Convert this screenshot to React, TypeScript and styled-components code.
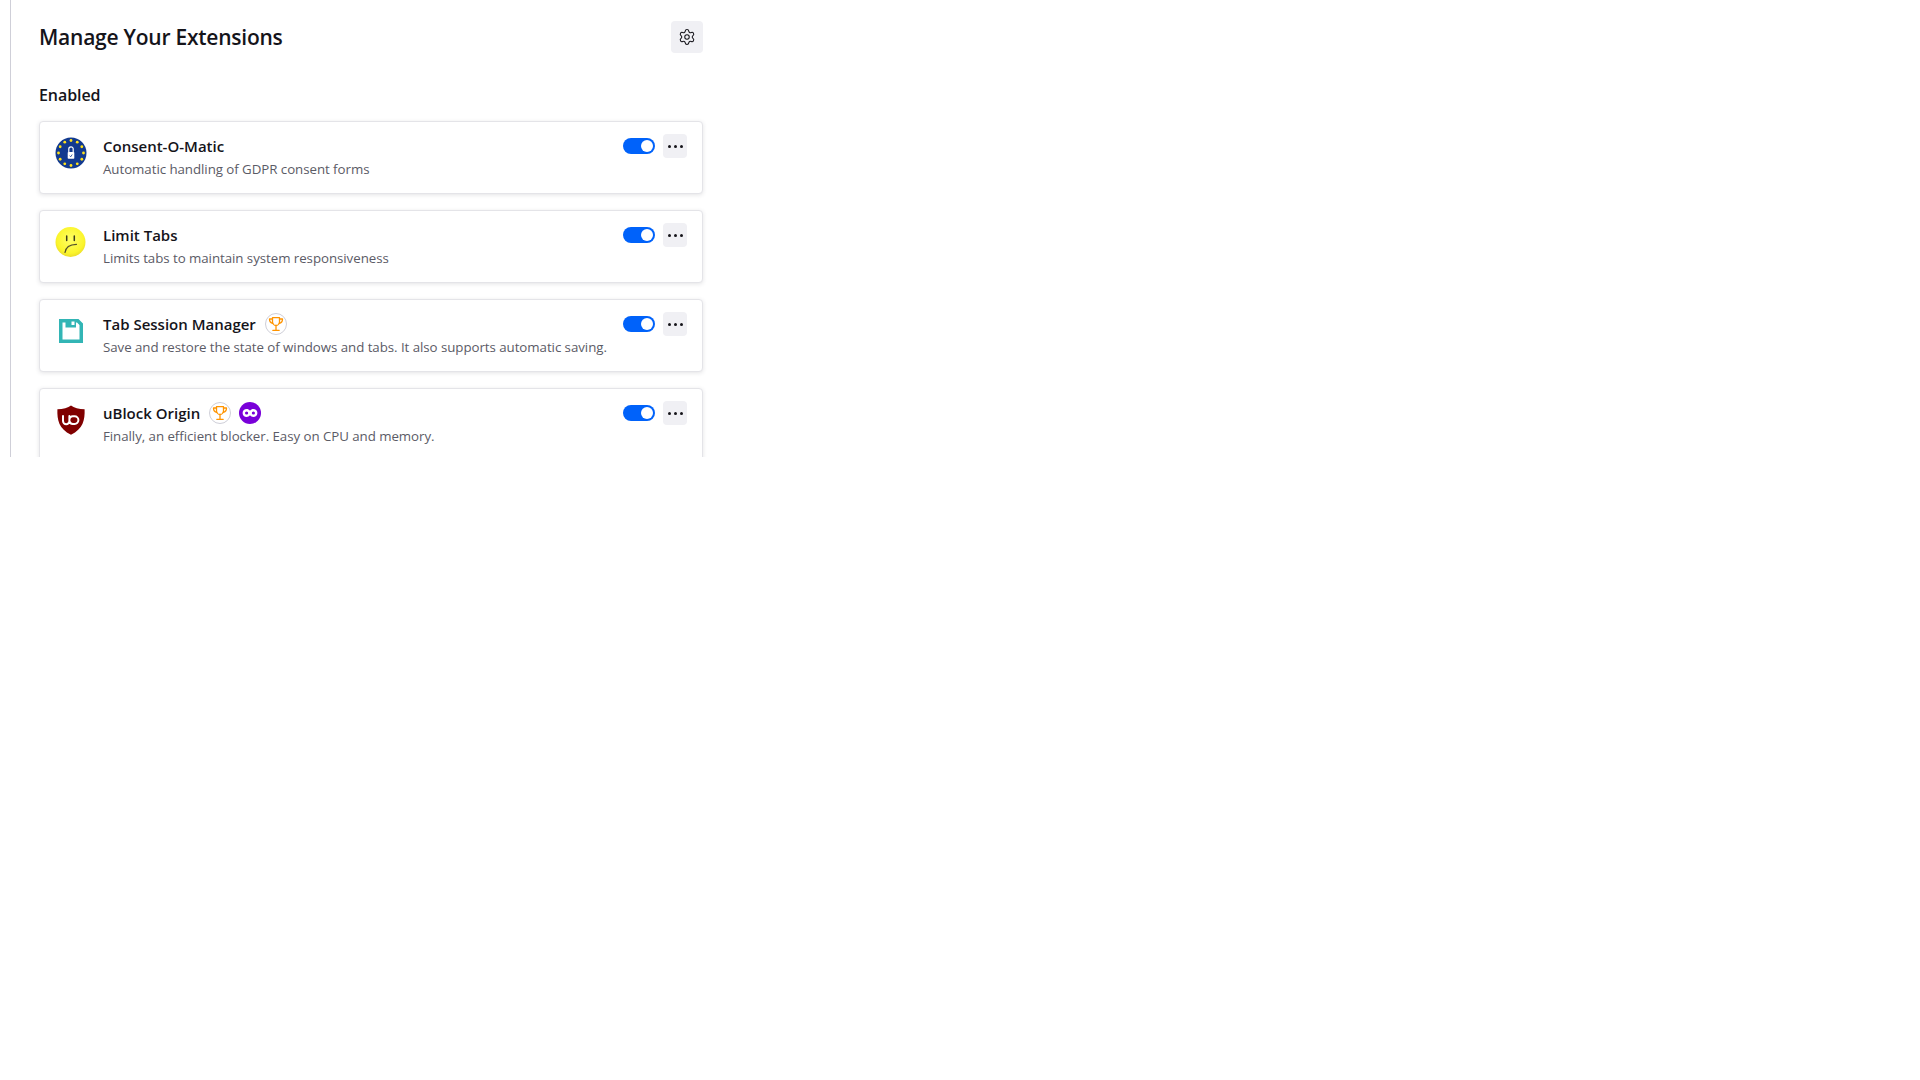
import React, { FC } from "react";
import styled, { createGlobalStyle } from "styled-components";
import { Settings } from "lucide-react";

const GlobalStyle = createGlobalStyle`
  html, body {
    margin: 0;
    padding: 0;
    background: #ffffff;
    font-family: "Open Sans", "Noto Sans", sans-serif;
    color: #15141a;
  }
`;

const Viewport = styled.div`
  height: 457px;
  overflow: hidden;
  margin-left: 10px;
  width: 720px;
  border-left: 1px solid #cfcfd8;
  box-sizing: border-box;
`;

const Content = styled.main`
  width: 664px;
  margin-left: 28px;
`;

const Header = styled.header`
  display: flex;
  align-items: center;
  justify-content: space-between;
  padding-top: 21px;
  height: 32px;
`;

const Title = styled.h1`
  margin: 0;
  font-size: 21px;
  font-weight: 600;
  letter-spacing: -0.24px;
  line-height: 32px;
`;

const SettingsButton = styled.button`
  width: 32px;
  height: 32px;
  padding: 0;
  border: none;
  border-radius: 4px;
  background: #f0f0f4;
  color: #15141a;
  display: flex;
  align-items: center;
  justify-content: center;
`;

const SectionTitle = styled.h2`
  margin: 30px 0 14px;
  font-size: 16px;
  font-weight: 600;
  letter-spacing: -0.08px;
  line-height: 24px;
`;

const CardList = styled.section`
  display: flex;
  flex-direction: column;
  gap: 16px;
`;

const Card = styled.article`
  height: 73px;
  box-sizing: border-box;
  display: flex;
  align-items: flex-start;
  padding: 12px 15px;
  background: #ffffff;
  border: 1px solid #e4e4e8;
  border-radius: 4px;
  box-shadow: 0 1px 4px rgba(58, 57, 68, 0.14);
`;

const IconSlot = styled.div`
  width: 32px;
  height: 32px;
  margin-top: 3px;
  margin-right: 16px;
  flex-shrink: 0;
  svg {
    display: block;
  }
`;

const Info = styled.div`
  flex: 1;
  min-width: 0;
`;

const NameRow = styled.div`
  display: flex;
  align-items: center;
  gap: 8px;
  height: 24px;
`;

const Name = styled.span`
  font-size: 15px;
  font-weight: 600;
  line-height: 24px;
  margin-right: 1px;
`;

const Desc = styled.p`
  margin: 1px 0 0;
  font-size: 13.3px;
  letter-spacing: -0.05px;
  line-height: 20px;
  color: #5b5b66;
  white-space: nowrap;
`;

const Controls = styled.div`
  display: flex;
  align-items: center;
  gap: 8px;
  height: 24px;
`;

const Toggle = styled.span`
  position: relative;
  display: block;
  width: 32px;
  height: 16px;
  border-radius: 8px;
  background: #0062fa;
  &::after {
    content: "";
    position: absolute;
    top: 2px;
    right: 2px;
    width: 12px;
    height: 12px;
    border-radius: 50%;
    background: #ffffff;
  }
`;

const MoreButton = styled.button`
  width: 24px;
  height: 24px;
  padding: 0;
  border: none;
  border-radius: 4px;
  background: #f0f0f4;
  display: flex;
  align-items: center;
  justify-content: center;
  gap: 3px;
`;

const Dot = styled.i`
  display: block;
  width: 3px;
  height: 3px;
  border-radius: 50%;
  background: #15141a;
`;

const RecommendedBadge = styled.span`
  width: 22px;
  height: 22px;
  box-sizing: border-box;
  border: 1px solid #cfcfd8;
  border-radius: 50%;
  display: flex;
  align-items: center;
  justify-content: center;
`;

const LineBadge = styled.span`
  width: 22px;
  height: 22px;
  display: block;
  svg {
    display: block;
  }
`;

const TrophyIcon: FC = () => (
  <svg width="16" height="16" viewBox="0 0 16 16" fill="none" stroke="#ff9400" strokeWidth="1.3" strokeLinecap="round" strokeLinejoin="round">
    <path d="M4.5 1.700h7v4.200a3.500 3.500 0 0 1-7 0z" />
    <path d="M4.500 3H1.500c0 2.600 1.100 4 3.400 4.400M11.500 3h3c0 2.600-1.100 4-3.400 4.400" />
    <path d="M8 9.400v4.600M4.800 14.300h6.400" />
  </svg>
);

const LineIcon: FC = () => (
  <svg width="22" height="22" viewBox="0 0 22 22">
    <circle cx="11" cy="11" r="11" fill="#7900d9" />
    <path
      fill="#ffffff"
      fillRule="evenodd"
      d="M3.600 11c0-2.400 1.900-4 4-4 1.400 0 2.500.6 3.400 1.700C11.900 7.600 13 7 14.400 7c2.100 0 4 1.600 4 4s-1.900 4-4 4c-1.400 0-2.500-.6-3.400-1.700C10.100 14.400 9 15 7.600 15c-2.100 0-4-1.600-4-4zm4-1.600a1.600 1.600 0 1 0 0 3.200 1.600 1.600 0 0 0 0-3.200zm6.800 0a1.600 1.600 0 1 0 0 3.200 1.600 1.600 0 0 0 0-3.200z"
    />
  </svg>
);

const ConsentIcon: FC = () => {
  const stars = Array.from({ length: 12 }, (_, i) => {
    const a = (i * Math.PI) / 6;
    return { x: 16 + 12.5 * Math.sin(a), y: 16 - 12.5 * Math.cos(a) };
  });
  return (
    <svg width="32" height="32" viewBox="0 0 32 32">
      <circle cx="16" cy="16" r="15.500" fill="#123a8f" />
      {stars.map((s, i) => (
        <circle key={i} cx={s.x} cy={s.y} r="1.400" fill="#ffe11a" />
      ))}
      <path d="M13.800 15v-3a2.200 2.200 0 0 1 4.400 0v3" fill="none" stroke="#ffffff" strokeWidth="1.200" />
      <rect x="12.700" y="15" width="6.600" height="6.800" rx="0.800" fill="#ffffff" />
      <path d="M14.700 18.700l1 1.100 1.500-2.300" fill="none" stroke="#123a8f" strokeWidth="0.800" />
    </svg>
  );
};

const FrownIcon: FC = () => (
  <svg width="32" height="32" viewBox="0 0 32 32">
    <defs>
      <radialGradient id="face" cx="50%" cy="42%" r="60%">
        <stop offset="0%" stopColor="#ffff66" />
        <stop offset="75%" stopColor="#fbf52c" />
        <stop offset="100%" stopColor="#e9d92a" />
      </radialGradient>
    </defs>
    <circle cx="15.500" cy="16" r="15" fill="url(#face)" />
    <path d="M11.700 10v4.500M19.300 10v4.500" stroke="#3b3a1a" strokeWidth="1.500" strokeLinecap="round" />
    <path d="M10 26.500c.6-5 4-8 11.500-8.200" fill="none" stroke="#55522a" strokeWidth="1.200" strokeLinecap="round" />
  </svg>
);

const FloppyIcon: FC = () => (
  <svg width="32" height="32" viewBox="0 0 32 32">
    <path
      fill="#32b5b5"
      fillRule="evenodd"
      d="M4 4h19.500L28 8.500V28H4zM7.500 7.500V24.500H24.500V10L22 7.500H21V12.500H10.500V7.500zM16.500 6.500V10H19.500V6.500z"
    />
  </svg>
);

const ShieldIcon: FC = () => (
  <svg width="32" height="32" viewBox="0 0 32 32">
    <path
      fill="#800000"
      d="M16 1.500c2.800 2.200 8 3.600 13.600 3.800.4 11-1.600 19.500-13.600 25.500C4 24.800 2 16.300 2.400 5.300 8 5.100 13.200 3.700 16 1.500z"
    />
    <path
      fill="none"
      stroke="#ffffff"
      strokeWidth="2"
      strokeLinecap="round"
      d="M8 12v5a3.200 3.200 0 0 0 6.400 0v-5M14.400 17v-1.300a3.400 3.400 0 0 1 3.400-3.400h1.800a3.800 3.800 0 0 1 0 7.600h-1.800a3.400 3.400 0 0 1-3.400-2.900"
    />
  </svg>
);

type Extension = {
  name: string;
  description: string;
  icon: React.ReactNode;
  recommended?: boolean;
  line?: boolean;
};

const extensions: Extension[] = [
  {
    name: "Consent-O-Matic",
    description: "Automatic handling of GDPR consent forms",
    icon: <ConsentIcon />,
  },
  {
    name: "Limit Tabs",
    description: "Limits tabs to maintain system responsiveness",
    icon: <FrownIcon />,
  },
  {
    name: "Tab Session Manager",
    description: "Save and restore the state of windows and tabs. It also supports automatic saving.",
    icon: <FloppyIcon />,
    recommended: true,
  },
  {
    name: "uBlock Origin",
    description: "Finally, an efficient blocker. Easy on CPU and memory.",
    icon: <ShieldIcon />,
    recommended: true,
    line: true,
  },
];

export default function App() {
  return (
    <>
      <GlobalStyle />
      <Viewport>
        <Content>
          <Header>
            <Title>Manage Your Extensions</Title>
            <SettingsButton aria-label="Settings">
              <Settings size={18} strokeWidth={1.4} />
            </SettingsButton>
          </Header>
          <SectionTitle>Enabled</SectionTitle>
          <CardList>
            {extensions.map((ext) => (
              <Card key={ext.name}>
                <IconSlot>{ext.icon}</IconSlot>
                <Info>
                  <NameRow>
                    <Name>{ext.name}</Name>
                    {ext.recommended && (
                      <RecommendedBadge>
                        <TrophyIcon />
                      </RecommendedBadge>
                    )}
                    {ext.line && (
                      <LineBadge>
                        <LineIcon />
                      </LineBadge>
                    )}
                  </NameRow>
                  <Desc>{ext.description}</Desc>
                </Info>
                <Controls>
                  <Toggle />
                  <MoreButton aria-label="More options">
                    <Dot />
                    <Dot />
                    <Dot />
                  </MoreButton>
                </Controls>
              </Card>
            ))}
          </CardList>
        </Content>
      </Viewport>
    </>
  );
}
